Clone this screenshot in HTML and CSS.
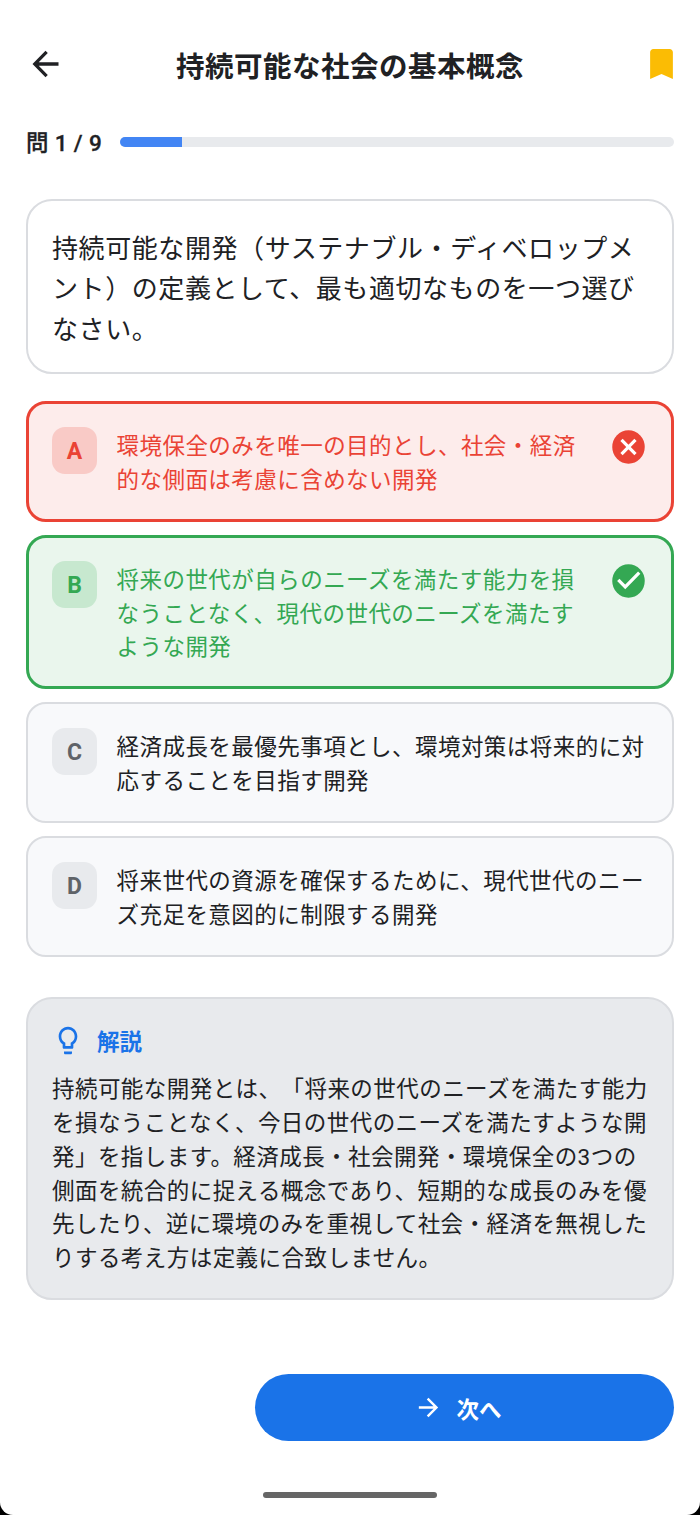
FILE: index.html
```html
<!DOCTYPE html>
<html lang="ja">
<head>
  <meta charset="UTF-8" />
  <meta name="viewport" content="width=device-width, initial-scale=1.0" />
  <title>持続可能な社会の基本概念</title>
  <link rel="stylesheet" href="styles.css">
</head>
<body>
  <div class="screen">
    <header class="header">
      <svg class="icon-back" viewBox="0 0 24 24" preserveAspectRatio="none"><path d="M20 11H7.83l5.59-5.59L12 4l-8 8 8 8 1.41-1.41L7.83 13H20v-2z"/></svg>
      <h1>持続可能な社会の基本概念</h1>
      <svg class="icon-bookmark" viewBox="0 0 24 24" preserveAspectRatio="none"><path d="M17 3H7c-1.1 0-2 .9-2 2v16l7-3 7 3V5c0-1.1-.9-2-2-2z"/></svg>
    </header>

    <div class="progress">
      <span class="progress-label">問 1 / 9</span>
      <div class="progress-track"><div class="progress-fill" style="width:11.11%"></div></div>
    </div>

    <div class="question">持続可能な開発（サステナブル・ディベロップメント）の定義として、最も適切なものを一つ選びなさい。</div>

    <div class="options">
      <div class="option wrong">
        <span class="letter">A</span>
        <p>環境保全のみを唯一の目的とし、社会・経済的な側面は考慮に含めない開発</p>
        <svg class="result" viewBox="0 0 24 24" preserveAspectRatio="none"><circle cx="12" cy="12" r="10"/><path d="M7.7 7.7l8.6 8.6M16.3 7.7l-8.6 8.6"/></svg>
      </div>
      <div class="option correct">
        <span class="letter">B</span>
        <p>将来の世代が自らのニーズを満たす能力を損なうことなく、現代の世代のニーズを満たすような開発</p>
        <svg class="result" viewBox="0 0 24 24" preserveAspectRatio="none"><circle cx="12" cy="12" r="10"/><path d="M5.7 11.3l4.3 4.3 8.6-8.6"/></svg>
      </div>
      <div class="option">
        <span class="letter">C</span>
        <p>経済成長を最優先事項とし、環境対策は将来的に対応することを目指す開発</p>
      </div>
      <div class="option">
        <span class="letter">D</span>
        <p>将来世代の資源を確保するために、現代世代のニーズ充足を意図的に制限する開発</p>
      </div>
    </div>

    <div class="explanation">
      <div class="explanation-title">
        <svg class="icon-bulb" viewBox="0 0 24 24" preserveAspectRatio="none"><path d="M9 21c0 .55.45 1 1 1h4c.55 0 1-.45 1-1v-1H9v1zm3-19C8.14 2 5 5.14 5 9c0 2.38 1.19 4.47 3 5.74V17c0 .55.45 1 1 1h6c.55 0 1-.45 1-1v-2.26c1.81-1.27 3-3.36 3-5.74 0-3.86-3.14-7-7-7zm2.85 11.1l-.85.6V16h-4v-2.3l-.85-.6C7.8 12.16 7 10.63 7 9c0-2.76 2.24-5 5-5s5 2.24 5 5c0 1.63-.8 3.16-2.15 4.1z"/></svg>
        <h2>解説</h2>
      </div>
      <p>持続可能な開発とは、「将来の世代のニーズを満たす能力を損なうことなく、今日の世代のニーズを満たすような開発」を指します。経済成長・社会開発・環境保全の3つの側面を統合的に捉える概念であり、短期的な成長のみを優先したり、逆に環境のみを重視して社会・経済を無視したりする考え方は定義に合致しません。</p>
    </div>

    <button class="btn-next">
      <svg viewBox="0 0 24 24"><path d="M12 4l-1.41 1.41L16.17 11H4v2h12.17l-5.58 5.59L12 20l8-8z"/></svg>
      <span>次へ</span>
    </button>

    <div class="home-indicator"></div>
  </div>
</body>
</html>
```
FILE: styles.css
```css
* {
  box-sizing: border-box;
}
body {
  margin: 0;
  background: #000;
  color: #202124;
  font-family: Roboto, 'Noto Sans CJK JP', sans-serif;
  text-spacing-trim: space-all;
}
h1, h2, p {
  margin: 0;
}
svg {
  display: block;
  flex: none;
  fill: currentColor;
}
.screen {
  display: flex;
  flex-direction: column;
  height: 1515px;
  padding: 0 26px;
  background: #fff;
  border-radius: 0 0 13px 13px;
}
.header {
  display: flex;
  align-items: center;
  justify-content: space-between;
  height: 40px;
  margin-top: 44px;
}
.header h1 {
  padding-top: 7px;
  font-size: 28.5px;
  font-weight: 600;
  line-height: 40px;
  letter-spacing: 0.5px;
}
.icon-back {
  width: 39px;
  height: 40px;
}
.icon-bookmark {
  width: 39px;
  height: 40px;
  margin-left: 7px;
  margin-right: -7px;
  color: #fbbc04;
}
.progress {
  display: flex;
  align-items: center;
  height: 32px;
  margin-top: 42px;
}
.progress-label {
  width: 94px;
  padding-bottom: 3px;
  font-size: 22.5px;
  font-weight: 500;
  white-space: nowrap;
  word-spacing: 0.7px;
  -webkit-text-stroke: 0.3px #202124;
}
.progress-track {
  flex: 1;
  height: 10px;
  border-radius: 6px;
  background: #e8eaed;
  overflow: hidden;
}
.progress-fill {
  height: 100%;
  background: #4285f4;
}
.question {
  height: 175px;
  margin-top: 41px;
  padding: 28px 22px 0 24px;
  border: 2px solid #dadce0;
  border-radius: 26px;
  font-size: 26px;
  line-height: 40.3px;
  letter-spacing: 0.58px;
}
.options {
  display: flex;
  flex-direction: column;
  gap: 13px;
  margin-top: 27px;
}
.option {
  display: flex;
  align-items: flex-start;
  min-height: 121px;
  padding: 24px 24px 22px;
  border: 2px solid #dadce0;
  border-radius: 20px;
  background: #f8f9fb;
}
.option p {
  flex: 1;
  padding-top: 3px;
  font-size: 22.5px;
  line-height: 33.7px;
  letter-spacing: 0.46px;
}
.letter {
  width: 45px;
  height: 47px;
  margin-right: 19.5px;
  border-radius: 13px;
  background: #e8eaed;
  color: #5f6368;
  font-size: 23px;
  font-weight: 700;
  line-height: 49px;
  text-align: center;
}
.result {
  width: 39px;
  height: 40px;
  margin-left: 16px;
}
.result path {
  fill: none;
  stroke: #fff;
  stroke-width: 2;
}
.wrong, .correct {
  padding: 23px 23px 21px;
  border-width: 3px;
}
.wrong {
  border-color: #ea4335;
  background: #fdeceb;
  color: #ea4335;
}
.wrong .letter {
  background: #f9cac6;
  color: #ea4335;
}
.correct {
  border-color: #34a853;
  background: #eaf6ed;
  color: #34a853;
}
.correct .letter {
  background: #c7e8cf;
  color: #34a853;
}
.explanation {
  height: 303px;
  margin-top: 40px;
  padding: 24px 0 0 24px;
  border: 2px solid #dadce0;
  border-radius: 26px;
  background: #e8eaed;
}
.explanation-title {
  display: flex;
  align-items: center;
  gap: 13px;
  height: 35px;
  color: #1a73e8;
}
.explanation-title h2 {
  padding-bottom: 2px;
  font-size: 22.5px;
  font-weight: 600;
}
.icon-bulb {
  width: 32px;
  height: 33px;
}
.explanation p {
  width: 598px;
  margin-top: 15px;
  font-size: 22.5px;
  line-height: 33.8px;
  letter-spacing: 0.45px;
}
.btn-next {
  display: flex;
  align-items: center;
  justify-content: center;
  align-self: flex-end;
  gap: 13px;
  width: 419px;
  height: 67px;
  margin-top: 74px;
  padding: 0 13px 0 0;
  border: none;
  border-radius: 34px;
  background: #1a73e8;
  color: #fff;
  font-family: inherit;
  font-size: 22.5px;
  font-weight: 600;
}
.btn-next svg {
  width: 29px;
  height: 29px;
}
.home-indicator {
  align-self: center;
  width: 174px;
  height: 6px;
  margin-top: 51px;
  border-radius: 3px;
  background: #666;
}
```
